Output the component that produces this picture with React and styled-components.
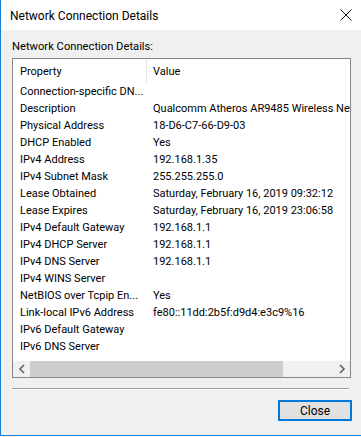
import React from "react";
import styled, { createGlobalStyle } from "styled-components";

const GlobalStyle = createGlobalStyle`
  html, body {
    margin: 0;
    padding: 0;
    background: #ffffff;
  }
  * {
    box-sizing: border-box;
  }
`;

const Window = styled.div`
  width: 361px;
  height: 436px;
  display: flex;
  flex-direction: column;
  background: #f0f0f0;
  border-left: 1px solid #1a7fd6;
  border-bottom: 1px solid #1a7fd6;
  font-family: Roboto, "Liberation Sans", Arial, sans-serif;
  font-size: 11px;
  color: #000;
  overflow: hidden;
`;

const TitleBar = styled.div`
  height: 30px;
  flex: none;
  display: flex;
  align-items: center;
  justify-content: space-between;
  background: #ffffff;
  padding: 0 9px 0 9px;
`;

const Title = styled.span`
  font-size: 12px;
  margin-top: 1px;
`;

const CloseX = styled.svg`
  width: 12px;
  height: 12px;
`;

const Body = styled.div`
  flex: 1;
  display: flex;
  flex-direction: column;
  padding: 0 10px 0 11px;
`;

const Label = styled.div`
  height: 28px;
  display: flex;
  align-items: center;
  padding-top: 5px;
  font-size: 11.2px;
`;

const ListBox = styled.div`
  height: 320px;
  border: 1px solid #828790;
  background: #ffffff;
  display: flex;
  flex-direction: column;
  overflow: hidden;
`;

const HeaderRow = styled.div`
  height: 24px;
  flex: none;
  display: grid;
  grid-template-columns: 134px 1fr;
  align-items: stretch;
`;

const HeaderCell = styled.div`
  display: flex;
  align-items: center;
  padding-left: ${(p) => p.$pad}px;
  border-right: ${(p) => (p.$divider ? "1px solid #e5e5e5" : "none")};
`;

const Rows = styled.div`
  flex: 1;
  overflow: hidden;
`;

const Row = styled.div`
  height: 17px;
  display: grid;
  grid-template-columns: 134px 1fr;
  align-items: center;
  white-space: nowrap;
`;

const Cell = styled.div`
  padding-left: ${(p) => p.$pad}px;
  overflow: hidden;
`;

const ScrollBar = styled.div`
  height: 16px;
  flex: none;
  display: flex;
  background: #f0f0f0;
`;

const Arrow = styled.div`
  width: 17px;
  flex: none;
  display: flex;
  align-items: center;
  justify-content: center;
`;

const Track = styled.div`
  flex: 1;
  display: flex;
`;

const Thumb = styled.div`
  background: #cdcdcd;
`;

const Separator = styled.div`
  margin-top: 10px;
  height: 2px;
  margin-right: 2px;
  border-top: 1px solid #a0a0a0;
  border-bottom: 1px solid #ffffff;
`;

const Footer = styled.div`
  display: flex;
  justify-content: flex-end;
  padding-top: 10px;
  margin-right: -1px;
`;

const Button = styled.button`
  width: 74px;
  height: 21px;
  padding: 0;
  border: 2px solid #0078d7;
  background: #e1e1e1;
  font-family: inherit;
  font-size: 12px;
  color: #000;
`;

const details = [
  ["Connection-specific DN...", ""],
  ["Description", "Qualcomm Atheros AR9485 Wireless Network Adapter"],
  ["Physical Address", "18-D6-C7-66-D9-03"],
  ["DHCP Enabled", "Yes"],
  ["IPv4 Address", "192.168.1.35"],
  ["IPv4 Subnet Mask", "255.255.255.0"],
  ["Lease Obtained", "Saturday, February 16, 2019 09:32:12"],
  ["Lease Expires", "Saturday, February 16, 2019 23:06:58"],
  ["IPv4 Default Gateway", "192.168.1.1"],
  ["IPv4 DHCP Server", "192.168.1.1"],
  ["IPv4 DNS Server", "192.168.1.1"],
  ["IPv4 WINS Server", ""],
  ["NetBIOS over Tcpip En...", "Yes"],
  ["Link-local IPv6 Address", "fe80::11dd:2b5f:d9d4:e3c9%16"],
  ["IPv6 Default Gateway", ""],
  ["IPv6 DNS Server", ""],
];

function Chevron({ dir }) {
  const d = dir === "left" ? "M6 1 L2 5 L6 9" : "M2 1 L6 5 L2 9";
  return (
    <svg width="8" height="10" viewBox="0 0 8 10">
      <path d={d} fill="none" stroke="#606060" strokeWidth="1.6" />
    </svg>
  );
}

export default function App() {
  return (
    <>
      <GlobalStyle />
      <Window>
        <TitleBar>
          <Title>Network Connection Details</Title>
          <CloseX viewBox="0 0 12 12">
            <path d="M0.5 0.5 L11.5 11.5 M11.5 0.5 L0.5 11.5" stroke="#111" strokeWidth="1" />
          </CloseX>
        </TitleBar>
        <Body>
          <Label>Network Connection Details:</Label>
          <ListBox>
            <HeaderRow>
              <HeaderCell $pad={7} $divider>
                Property
              </HeaderCell>
              <HeaderCell $pad={6}>Value</HeaderCell>
            </HeaderRow>
            <Rows>
              {details.map(([name, value]) => (
                <Row key={name}>
                  <Cell $pad={7}>{name}</Cell>
                  <Cell $pad={6}>{value}</Cell>
                </Row>
              ))}
            </Rows>
            <ScrollBar>
              <Arrow>
                <Chevron dir="left" />
              </Arrow>
              <Track>
                <Thumb style={{ width: `${(252 / 302) * 100}%` }} />
              </Track>
              <Arrow>
                <Chevron dir="right" />
              </Arrow>
            </ScrollBar>
          </ListBox>
          <Separator />
          <Footer>
            <Button>Close</Button>
          </Footer>
        </Body>
      </Window>
    </>
  );
}
